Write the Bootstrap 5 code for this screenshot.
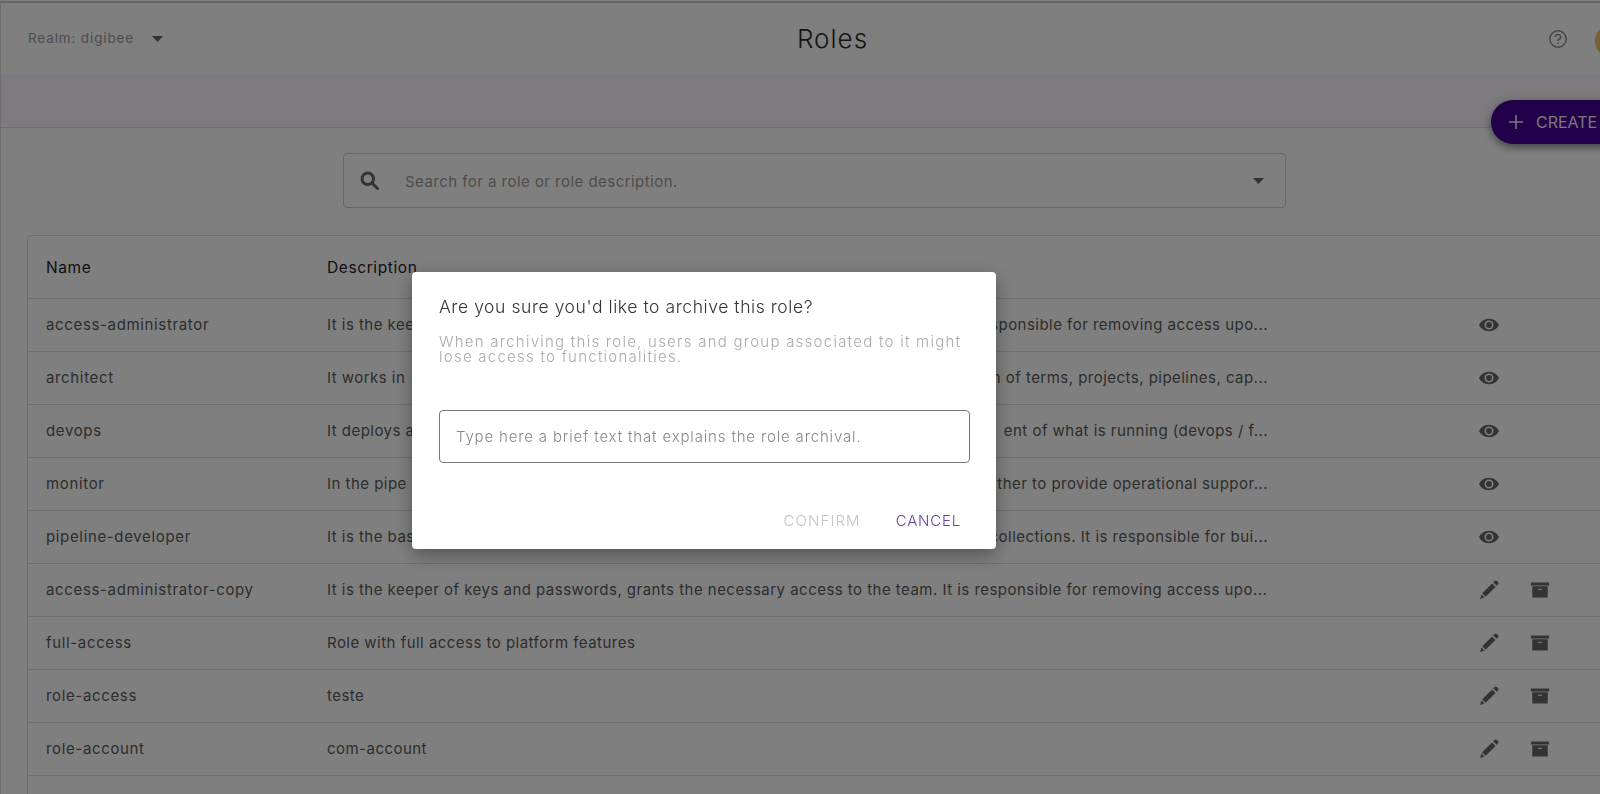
<!DOCTYPE html>
<html lang="en">

<head>
    <meta charset="UTF-8" />
    <meta name="viewport" content="width=device-width, initial-scale=1.0" />
    <title>Roles</title>
    <link href="https://cdn.jsdelivr.net/npm/bootstrap@5.3.0/dist/css/bootstrap.min.css" rel="stylesheet" />
    <style>
        html, body { height: 794px; overflow: hidden; }
        body { font-family: Inter, "Open Sans", sans-serif; background: #fff; }
        .page-wrap { width: 1664px; border-top: 2px solid #ccc; border-left: 1px solid #ddd; margin-top: 1px; }
        .top-bar { height: 71px; padding-left: 27px; position: relative; }
        .realm-label { font-size: 13.5px; color: #9a9a9a; letter-spacing: .86px; margin-right: 18px; }
        .page-title { position: absolute; left: 0; right: 0; top: 20px; text-align: center; font-size: 26px; line-height: 32px; color: #2b2b2b; margin: 0; font-weight: 300; letter-spacing: 1px; }
        .help-icon { position: absolute; left: 1547px; top: 26px; }
        .avatar-dot { position: absolute; left: 1594px; top: 21px; width: 34px; height: 34px; border-radius: 50%; background: #f0c070; }
        .sub-band { height: 54px; background: #faf6ff; border-bottom: 1px solid #ddd; position: relative; }
        .create-btn { position: absolute; left: 1490px; top: 26px; height: 44px; width: 170px; border-radius: 22px; background: #440094; color: #f4eef8; border: 0; box-shadow: 0 3px 8px rgba(0,0,0,.5); font-size: 16px; font-weight: 400; padding: 0 0 0 16px; gap: 11px; }
        .create-btn:hover { background: #440094; color: #f4eef8; }
        .search-box { margin: 25px 0 27px 342px; width: 943px; height: 55px; border: 1px solid #ccc; border-radius: 4px; padding: 0 21px 0 16px; color: #999; font-size: 15px; }
        .search-text { margin-left: 26px; padding-top: 3px; letter-spacing: .46px; }
        .roles-card { margin-left: 26px; width: 1640px; border: 1px solid #ddd; border-radius: 4px 4px 0 0; }
        .roles-table { table-layout: fixed; margin: 0; --bs-table-bg: transparent; --bs-table-border-color: #ddd; }
        .roles-table th, .roles-table td { padding: 1px 18px 0; vertical-align: middle; font-size: 15px; color: #5a5a5a; font-weight: 400; letter-spacing: .47px; white-space: nowrap; }
        .roles-table th { color: #222; height: 62px; font-size: 15.5px; letter-spacing: .6px; }
        .roles-table td { height: 53px; }
        .roles-table td:first-child { letter-spacing: .65px; }
        .desc-wide { width: 941px; }
        .row-actions { gap: 31px; }
        .row-actions svg { width: 20px; height: 20px; fill: #666; }
        .dim-layer { position: fixed; inset: 0; background: rgba(0,0,0,.5); z-index: 10; }
        .archive-dialog { position: absolute; left: 412px; top: 272px; width: 584px; height: 277px; background: #fff; border: 0; border-radius: 4px; padding: 23px 27px 9px 27px; box-shadow: 0 6px 18px rgba(0,0,0,.35); }
        .dialog-title { font-size: 17.5px; font-weight: 300; line-height: 24px; color: #333; margin: 0 0 15px; letter-spacing: .57px; }
        .dialog-text { font-size: 15px; line-height: 15px; font-weight: 300; letter-spacing: 1.25px; color: #aaa; margin: 0 0 46px; }
        .dialog-input { height: 53px; width: 531px; flex-shrink: 0; border: 1px solid #777; border-radius: 4px; padding: 0 16px; font-size: 15px; letter-spacing: .84px; font-family: inherit; }
        .dialog-input::placeholder { color: #888; font-weight: 300; opacity: 1; }
        .dialog-foot { gap: 19px; }
        .dialog-btn { font-size: 15px; font-weight: 300; letter-spacing: .8px; padding: 8px; border: 0; background: none; }
        .dialog-btn.off { color: #c4c4c4; letter-spacing: 1.1px; }
        .dialog-btn.go { color: #6a3fa5; }
    </style>
</head>

<body>
    <svg width="0" height="0" class="d-none">
        <symbol id="i-eye" viewBox="0.6 0 20.8 16"><path fill-rule="evenodd" d="M11 1.5C6.300 1.500 2.400 4.400.6 8c1.800 3.600 5.700 6.500 10.400 6.500S19.600 11.600 21.400 8C19.600 4.400 15.700 1.500 11 1.500zM11 3.300a4.700 4.700 0 1 1 0 9.400 4.700 4.700 0 0 1 0-9.400zM11 5a3 3 0 1 0 0 6 3 3 0 0 0 0-6z" /></symbol>
        <symbol id="i-pen" viewBox="0 0 22 22"><path d="M15.600 2.600 17 1.200a2 2 0 0 1 2.800 0l1 1a2 2 0 0 1 0 2.800l-1.400 1.400zM14.400 3.800l3.800 3.800L7.300 18.500l-3.800-3.800zM2.700 15.900l3.400 3.400-4.900 1.500z" /></symbol>
        <symbol id="i-box" viewBox="0 0 22 22"><path fill-rule="evenodd" d="M1 2.800h20V6H1zM2.500 7h17v12.300h-17zM8.800 9.500v1.200h4.400V9.500z" /></symbol>
    </svg>

    <div class="page-wrap">
        <header class="top-bar d-flex align-items-center">
            <span class="realm-label">Realm: digibee</span>
            <svg width="11" height="6" viewBox="0 0 11 6"><path d="M0 0h11L5.500 6z" fill="#666" /></svg>
            <h1 class="page-title">Roles</h1>
            <svg class="help-icon" width="20" height="20" viewBox="0 0 20 20" fill="none" stroke="#888" stroke-width="1.400"><circle cx="10" cy="10" r="8.200" /><path d="M7.600 7.900a2.500 2.500 0 1 1 3.600 2.200c-.8.4-1.200 1-1.200 1.800" /><path d="M10 13.800v1.300" /></svg>
            <span class="avatar-dot"></span>
        </header>

        <div class="sub-band">
            <button type="button" class="btn create-btn d-flex align-items-center">
                <svg width="18" height="18" viewBox="0 0 18 18" stroke="#f4eef8" stroke-width="1.600"><path d="M9 2v14M2 9h14" /></svg>
                CREATE ROLE
            </button>
        </div>

        <!-- Busca -->
        <div class="search-box d-flex align-items-center">
            <svg width="19" height="19" viewBox="0 0 19 19" fill="none" stroke="#666" stroke-width="3"><circle cx="7.800" cy="7.800" r="5.800" /><path d="m12 12 5.500 5.500" stroke-linecap="round" /></svg>
            <span class="search-text flex-grow-1">Search for a role or role description.</span>
            <svg width="11" height="6" viewBox="0 0 11 6"><path d="M0 0h11L5.500 6z" fill="#666" /></svg>
        </div>

        <!-- Lista de roles -->
        <div class="roles-card">
            <table class="table roles-table">
                <colgroup>
                    <col style="width: 281px" />
                    <col style="width: 1152px" />
                    <col />
                </colgroup>
                <thead>
                    <tr><th>Name</th><th>Description</th><th></th></tr>
                </thead>
                <tbody>
                    <tr>
                        <td>access-administrator</td>
                        <td><div class="desc-wide d-flex justify-content-between"><span>It is the kee</span><span>sponsible for removing access upo...</span></div></td>
                        <td><div class="row-actions d-flex"><svg><use href="#i-eye" /></svg></div></td>
                    </tr>
                    <tr>
                        <td>architect</td>
                        <td><div class="desc-wide d-flex justify-content-between"><span>It works in</span><span>n of terms, projects, pipelines, cap...</span></div></td>
                        <td><div class="row-actions d-flex"><svg><use href="#i-eye" /></svg></div></td>
                    </tr>
                    <tr>
                        <td>devops</td>
                        <td><div class="desc-wide d-flex justify-content-between"><span>It deploys a</span><span>ent of what is running (devops / f...</span></div></td>
                        <td><div class="row-actions d-flex"><svg><use href="#i-eye" /></svg></div></td>
                    </tr>
                    <tr>
                        <td>monitor</td>
                        <td><div class="desc-wide d-flex justify-content-between"><span>In the pipe</span><span>ther to provide operational suppor...</span></div></td>
                        <td><div class="row-actions d-flex"><svg><use href="#i-eye" /></svg></div></td>
                    </tr>
                    <tr>
                        <td>pipeline-developer</td>
                        <td><div class="desc-wide d-flex justify-content-between"><span>It is the bas</span><span>collections. It is responsible for bui...</span></div></td>
                        <td><div class="row-actions d-flex"><svg><use href="#i-eye" /></svg></div></td>
                    </tr>
                    <tr>
                        <td>access-administrator-copy</td>
                        <td>It is the keeper of keys and passwords, grants the necessary access to the team. It is responsible for removing access upo...</td>
                        <td><div class="row-actions d-flex"><svg><use href="#i-pen" /></svg><svg><use href="#i-box" /></svg></div></td>
                    </tr>
                    <tr>
                        <td>full-access</td>
                        <td>Role with full access to platform features</td>
                        <td><div class="row-actions d-flex"><svg><use href="#i-pen" /></svg><svg><use href="#i-box" /></svg></div></td>
                    </tr>
                    <tr>
                        <td>role-access</td>
                        <td>teste</td>
                        <td><div class="row-actions d-flex"><svg><use href="#i-pen" /></svg><svg><use href="#i-box" /></svg></div></td>
                    </tr>
                    <tr>
                        <td>role-account</td>
                        <td>com-account</td>
                        <td><div class="row-actions d-flex"><svg><use href="#i-pen" /></svg><svg><use href="#i-box" /></svg></div></td>
                    </tr>
                    <tr><td></td><td></td><td></td></tr>
                </tbody>
            </table>
        </div>
    </div>

    <!-- Dialogo de arquivamento -->
    <div class="dim-layer">
        <div class="modal-content archive-dialog">
            <h2 class="dialog-title">Are you sure you'd like to archive this role?</h2>
            <p class="dialog-text">When archiving this role, users and group associated to it might<br />lose access to functionalities.</p>
            <input type="text" class="dialog-input" placeholder="Type here a brief text that explains the role archival." />
            <div class="dialog-foot d-flex justify-content-end mt-auto">
                <button type="button" class="dialog-btn off">CONFIRM</button>
                <button type="button" class="dialog-btn go">CANCEL</button>
            </div>
        </div>
    </div>
</body>

</html>
